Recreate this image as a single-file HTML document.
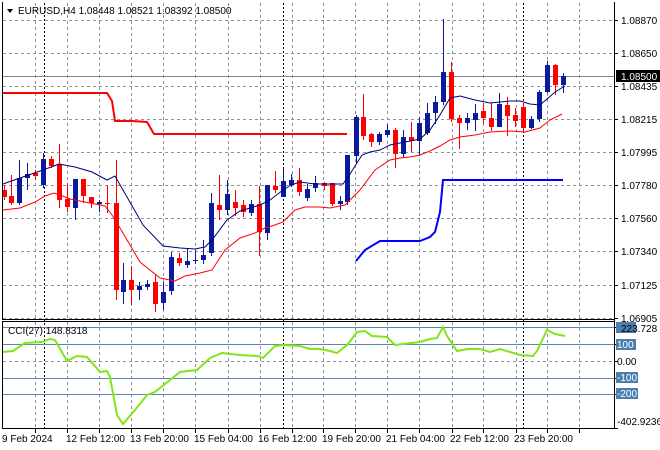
<!DOCTYPE html>
<html><head><meta charset="utf-8"><style>
html,body{margin:0;padding:0;background:#fff;width:660px;height:450px;overflow:hidden}
svg{display:block;font-family:"Liberation Sans",sans-serif;font-size:10px}
</style></head><body>
<svg id="s" width="660" height="450" xmlns="http://www.w3.org/2000/svg">
<rect width="660" height="450" fill="#fff"/>
<g id="grid" stroke="#8a929a" stroke-dasharray="3,3" stroke-width="1"></g>
<g stroke="#000" stroke-dasharray="2,2" stroke-width="1">
<line x1="44.5" y1="3" x2="44.5" y2="428"/><line x1="283.5" y1="3" x2="283.5" y2="428"/><line x1="523.5" y1="3" x2="523.5" y2="428"/>
</g>
<!-- CCI levels -->
<g stroke="#5a86b0" stroke-width="1">
<line x1="3" y1="327.5" x2="614" y2="327.5"/><line x1="3" y1="344.5" x2="614" y2="344.5"/>
<line x1="3" y1="378.5" x2="614" y2="378.5"/><line x1="3" y1="394.5" x2="614" y2="394.5"/>
</g>
<line x1="3" y1="76.5" x2="614" y2="76.5" stroke="#7a8a9a"/>
<polyline fill="none" stroke="#ff0000" stroke-width="2" points="3,93 107,93 112,101 115,121 132,121 147,122 154,134 347,134"/>
<polyline fill="none" stroke="#0000ff" stroke-width="2" points="356,261 365,250 380,241 420,241 430,237 435,232 440,212 443,180 563,180"/>
<g id="candles"></g>
<polyline fill="none" stroke="#00007a" stroke-width="1" points="3,184 20,178 43,170 59,164 75,167 92,172 107,180 115,176 143,225 163,246 180,248 195,249 205,247 212,240 227,220 240,211 260,205 270,200 283,190 291,185 300,182 315,184 330,184 343,184 350,174 362,155 370,152 380,150 390,145 410,141 420,139 430,130 440,115 450,98 460,96 475,100 490,103 510,101 520,101 530,104 540,105 547,99 555,92 565,86"/>
<polyline fill="none" stroke="#ff0000" stroke-width="1" points="3,210 20,208 35,202 45,196 54,193 60,195 70,199 90,203 105,206 112,215 120,228 140,262 160,278 175,281 185,276 200,273 212,270 225,250 240,238 255,233 265,228 275,225 283,222 295,210 305,207 320,207 330,208 345,205 360,190 375,170 390,160 400,158 410,157 420,155 430,151 440,146 450,140 460,137 475,135 490,132 510,131 525,132 540,128 550,120 562,114"/>
<polyline fill="none" stroke="#80e61a" stroke-width="2" points="3,352 13,351 25,343 42,342 50,339 55,340 67,361 77,356 87,357 100,372 107,371 110,377 117,415 123,424 135,410 147,395 155,392 170,380 180,372 197,370 210,358 222,353 240,355 258,356 263,358 275,346 283,345 300,346 310,349 320,349 330,351 337,353 348,344 357,332 365,331 372,336 387,337 395,345 403,344 420,342 430,339 437,338 443,327 447,336 457,351 468,349 480,349 490,352 500,349 510,352 520,355 533,356 537,351 547,330 555,334 565,336"/>
<!-- borders -->
<g stroke="#000" fill="none">
<line x1="2.5" y1="2" x2="2.5" y2="319"/><line x1="2.5" y1="322" x2="2.5" y2="429"/>
<line x1="614.5" y1="2" x2="614.5" y2="429"/>
<line x1="2" y1="319.5" x2="615" y2="319.5"/><line x1="2" y1="321.5" x2="615" y2="321.5"/>
<line x1="2" y1="428.5" x2="615" y2="428.5"/>
</g>
<g id="ticks" stroke="#000"></g>
<!-- header -->
<path d="M7,9 L13,9 L10,13 Z" fill="#000"/>
<text x="18" y="14" fill="#000">EURUSD,H4  1.08448 1.08521 1.08392 1.08500</text>
<text x="8" y="334" fill="#000">CCI(27) 148.8318</text>
<!-- price labels -->
<g fill="#000">
<text x="621" y="24">1.08870</text><text x="621" y="57">1.08650</text>
<text x="621" y="90">1.08435</text><text x="621" y="123">1.08215</text>
<text x="621" y="156">1.07995</text><text x="621" y="189">1.07780</text>
<text x="621" y="222">1.07560</text><text x="621" y="255">1.07340</text>
<text x="621" y="289">1.07125</text><text x="621" y="322">1.06905</text>
</g>
<rect x="616" y="70" width="44" height="12" fill="#000"/>
<text x="621" y="80" fill="#fff">1.08500</text>
<rect x="616" y="322" width="20" height="11" fill="#4a7fb0"/>
<text x="621" y="332" fill="#000">223.728</text>
<rect x="616" y="339" width="20" height="11" fill="#4a7fb0"/><text x="617" y="348" fill="#fff">100</text>
<text x="617" y="365" fill="#000">0.00</text>
<rect x="616" y="372" width="22" height="11" fill="#4a7fb0"/><text x="617" y="381" fill="#fff">-100</text>
<rect x="616" y="388" width="22" height="11" fill="#4a7fb0"/><text x="617" y="397" fill="#fff">-200</text>
<text x="617" y="425" fill="#000">-402.9236</text>
<!-- time labels -->
<g fill="#000">
<text x="2" y="442">9 Feb 2024</text><text x="66" y="442">12 Feb 12:00</text>
<text x="130" y="442">13 Feb 20:00</text><text x="194" y="442">15 Feb 04:00</text>
<text x="258" y="442">16 Feb 12:00</text><text x="322" y="442">19 Feb 20:00</text>
<text x="386" y="442">21 Feb 04:00</text><text x="450" y="442">22 Feb 12:00</text>
<text x="514" y="442">23 Feb 20:00</text>
</g>
</svg>
<script>
var NS="http://www.w3.org/2000/svg";
function el(p,t,a){var e=document.createElementNS(NS,t);for(var k in a)e.setAttribute(k,a[k]);p.appendChild(e);return e;}
var g=document.getElementById('grid');
var xs=[35,67,99,131,163,195,228,260,292,323,355,387,419,452,483,516,547,579];
xs.forEach(function(x){el(g,'line',{x1:x+.5,y1:3,x2:x+.5,y2:319});el(g,'line',{x1:x+.5,y1:322,x2:x+.5,y2:428});});
[20,53,86,119,152,185,218,251,285,318].forEach(function(y){el(g,'line',{x1:3,y1:y+.5,x2:614,y2:y+.5});});
el(g,'line',{x1:3,y1:361.5,x2:614,y2:361.5});
var t=document.getElementById('ticks');
[20,53,86,119,152,185,218,251,285,318,327,344,361,378,394,428].forEach(function(y){el(t,'line',{x1:614,y1:y+.5,x2:618,y2:y+.5});});
xs.forEach(function(x){el(t,'line',{x1:x+.5,y1:429,x2:x+.5,y2:433});});
// x, color, bodyTop, bodyBot, wickTop, wickBot
var C=[[4,'r',190,197,185,200],[11,'r',196,203,175,205],[19,'b',178,203,160,205],[27,'b',174,178,163,190],[35,'r',173,176,170,180],[43,'b',159,185,153,188],[51,'r',159,166,156,168],[59,'r',164,200,144,208],[67,'r',199,207,183,212],[75,'b',179,208,179,220],[83,'r',179,196,179,203],[91,'r',197,203,197,208],[99,'b',202,204,200,212],[107,'r',203,204,185,213],[116,'r',203,290,160,300],[123,'b',280,292,263,304],[131,'r',280,290,266,305],[139,'b',286,290,282,300],[147,'b',284,287,280,290],[155,'r',282,304,275,312],[163,'b',292,303,282,310],[171,'b',257,291,252,295],[179,'r',258,263,253,266],[187,'b',261,265,249,268],[195,'b',260,261,250,264],[203,'b',255,260,240,264],[211,'b',203,253,193,256],[219,'r',205,210,175,220],[227,'b',194,210,180,215],[235,'r',202,208,190,216],[243,'r',205,212,200,217],[251,'b',204,213,200,216],[259,'r',204,232,186,256],[267,'b',185,233,185,240],[275,'r',186,190,171,193],[283,'b',181,197,169,197],[291,'b',180,185,174,187],[299,'r',180,192,168,196],[307,'b',189,198,184,201],[315,'b',183,188,176,192],[324,'r',183,186,182,190],[332,'r',183,204,183,206],[340,'b',201,204,196,210],[347,'b',155,202,155,205],[356,'b',117,156,115,163],[363,'r',117,136,94,140],[371,'r',134,142,133,147],[379,'b',134,142,132,145],[387,'b',130,135,124,137],[395,'r',130,154,128,168],[403,'b',137,154,130,157],[411,'r',137,141,122,152],[419,'b',123,141,117,155],[427,'b',113,133,103,135],[435,'b',102,113,96,124],[443,'b',72,102,19,105],[451,'r',72,119,62,122],[459,'r',118,123,115,149],[467,'b',118,123,113,130],[475,'b',113,120,104,131],[483,'r',111,118,103,124],[491,'r',118,127,103,131],[499,'b',104,127,93,127],[507,'r',105,116,97,136],[515,'r',115,121,108,127],[523,'r',107,128,103,132],[531,'b',119,128,116,129],[539,'b',92,119,90,122],[547,'b',65,92,61,93],[555,'r',65,85,64,95],[563,'b',76,85,73,93]];
var cg=document.getElementById('candles');
C.forEach(function(c){var col=c[1]=='r'?'#ff0000':'#0a1a9c';
el(cg,'line',{x1:c[0]+.5,y1:c[4],x2:c[0]+.5,y2:c[5],stroke:col});
el(cg,'rect',{x:c[0]-2,y:c[2],width:5,height:Math.max(1,c[3]-c[2]),fill:col});});
</script>
</body></html>
